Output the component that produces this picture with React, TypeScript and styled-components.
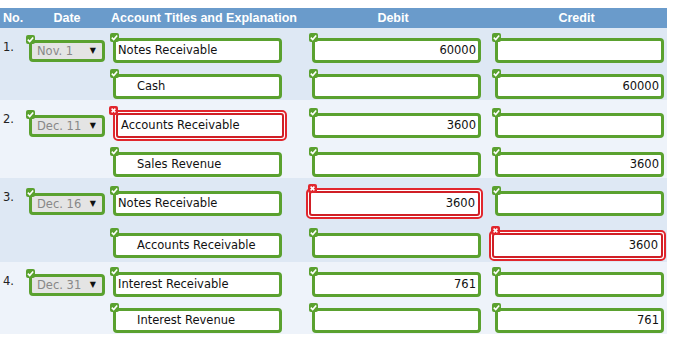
import styled, { createGlobalStyle } from "styled-components";

const GlobalStyle = createGlobalStyle`
  body {
    margin: 0;
    padding-top: 8px;
    background: #fff;
    font-family: "DejaVu Sans", Verdana, sans-serif;
  }
`;

const COLS = "26px 82px 192px 186px 181px";
const GREEN = "#5aa12f";
const RED = "#e1262d";

const Table = styled.div`
  width: 667px;
`;

const HeaderRow = styled.div`
  display: grid;
  grid-template-columns: ${COLS};
  height: 20px;
  align-items: center;
  background: #6a9bcb;
  color: #fff;
  font-family: "Liberation Sans", Arial, sans-serif;
  font-weight: bold;
  font-size: 12.5px;
`;

const HeadCell = styled.div<{ $left?: boolean }>`
  text-align: ${(p) => (p.$left ? "left" : "center")};
  padding-left: ${(p) => (p.$left ? "3px" : "0")};
  white-space: nowrap;
`;

const Entry = styled.div<{ $alt: boolean }>`
  background: ${(p) => (p.$alt ? "#eef3fa" : "#dee8f4")};
`;

const Line = styled.div`
  display: grid;
  grid-template-columns: ${COLS};
  align-items: center;
  padding: 10px 0 1px;
`;

const No = styled.div`
  align-self: start;
  padding: 2px 0 0 3px;
  font-size: 11.5px;
  color: #222;
`;

const Cell = styled.div<{ $pad: number }>`
  display: flex;
  padding-left: ${(p) => p.$pad}px;
`;

const Field = styled.div`
  position: relative;
`;

const Badge = styled.svg`
  position: absolute;
  left: -3px;
  top: -5px;
  width: 9px;
  height: 9px;
`;

const DateBox = styled.div`
  box-sizing: border-box;
  width: 76px;
  height: 22px;
  border: 3px solid ${GREEN};
  border-radius: 4px;
  background: #e4e4e4;
  color: #888;
  font-size: 11.5px;
  display: flex;
  align-items: center;
  justify-content: space-between;
  padding: 0 6px 0 5px;
`;

const Arrow = styled.span`
  color: #111;
  font-size: 8px;
`;

const Box = styled.div<{ $right?: boolean; $indent?: boolean }>`
  box-sizing: border-box;
  width: 169px;
  height: 25px;
  border: 3px solid ${GREEN};
  border-radius: 4px;
  background: #fff;
  color: #111;
  font-size: 11.5px;
  line-height: 19px;
  white-space: nowrap;
  text-align: ${(p) => (p.$right ? "right" : "left")};
  padding: 0 ${(p) => (p.$right ? "2px" : "0")} 0 ${(p) => (p.$indent ? "21px" : "2px")};
`;

const ErrorFrame = styled.div<{ $numeric?: boolean }>`
  box-sizing: border-box;
  width: ${(p) => (p.$numeric ? "177px" : "174px")};
  height: 31px;
  margin-left: ${(p) => (p.$numeric ? "-6px" : "0")};
  border: 2px solid ${RED};
  border-radius: 5px;
  padding: 1px;
  background: #fff;
`;

const ErrorInner = styled.div<{ $right?: boolean }>`
  box-sizing: border-box;
  height: 25px;
  border: 2px solid #d01f26;
  border-radius: 3px;
  background: #fff;
  color: #111;
  font-size: 11.5px;
  line-height: 21px;
  white-space: nowrap;
  text-align: ${(p) => (p.$right ? "right" : "left")};
  padding: 0 3px 0 3px;
`;

const Check = () => (
  <Badge viewBox="0 0 9 9">
    <rect width="9" height="9" rx="2" fill={GREEN} />
    <path d="M1.8 4.6 L3.7 6.5 L7.2 2.4" stroke="#fff" strokeWidth="1.6" fill="none" />
  </Badge>
);

const Cross = () => (
  <Badge viewBox="0 0 9 9" style={{ left: -4, top: -4 }}>
    <rect width="9" height="9" rx="2" fill={RED} />
    <path d="M2.6 2.6 L6.4 6.4 M6.4 2.6 L2.6 6.4" stroke="#fff" strokeWidth="1.5" fill="none" />
  </Badge>
);

type LineData = {
  account: string;
  debit: string;
  credit: string;
  indent?: boolean;
  err?: "account" | "debit" | "credit";
};

type EntryData = { no: number; date: string; lines: LineData[] };

const entries: EntryData[] = [
  {
    no: 1,
    date: "Nov. 1",
    lines: [
      { account: "Notes Receivable", debit: "60000", credit: "" },
      { account: "Cash", debit: "", credit: "60000", indent: true },
    ],
  },
  {
    no: 2,
    date: "Dec. 11",
    lines: [
      { account: "Accounts Receivable", debit: "3600", credit: "", err: "account" },
      { account: "Sales Revenue", debit: "", credit: "3600", indent: true },
    ],
  },
  {
    no: 3,
    date: "Dec. 16",
    lines: [
      { account: "Notes Receivable", debit: "3600", credit: "", err: "debit" },
      { account: "Accounts Receivable", debit: "", credit: "3600", indent: true, err: "credit" },
    ],
  },
  {
    no: 4,
    date: "Dec. 31",
    lines: [
      { account: "Interest Receivable", debit: "761", credit: "" },
      { account: "Interest Revenue", debit: "", credit: "761", indent: true },
    ],
  },
];

const InputField = ({
  value,
  right,
  indent,
  error,
}: {
  value: string;
  right?: boolean;
  indent?: boolean;
  error?: boolean;
}) =>
  error ? (
    <Field>
      <ErrorFrame $numeric={right}>
        <ErrorInner $right={right}>{value}</ErrorInner>
      </ErrorFrame>
      <Cross />
    </Field>
  ) : (
    <Field>
      <Box $right={right} $indent={indent}>
        {value}
      </Box>
      <Check />
    </Field>
  );

const App = () => (
  <>
    <GlobalStyle />
    <Table>
      <HeaderRow>
        <HeadCell $left>No.</HeadCell>
        <HeadCell>Date</HeadCell>
        <HeadCell>Account Titles and Explanation</HeadCell>
        <HeadCell>Debit</HeadCell>
        <HeadCell>Credit</HeadCell>
      </HeaderRow>
      {entries.map((entry, i) => (
        <Entry key={entry.no} $alt={i % 2 === 1}>
          {entry.lines.map((line, j) => (
            <Line key={j}>
              <No>{j === 0 ? `${entry.no}.` : ""}</No>
              <Cell $pad={3}>
                {j === 0 && (
                  <Field>
                    <DateBox>
                      {entry.date}
                      <Arrow>▼</Arrow>
                    </DateBox>
                    <Check />
                  </Field>
                )}
              </Cell>
              <Cell $pad={5}>
                <InputField value={line.account} indent={line.indent} error={line.err === "account"} />
              </Cell>
              <Cell $pad={12}>
                <InputField value={line.debit} right error={line.err === "debit"} />
              </Cell>
              <Cell $pad={9}>
                <InputField value={line.credit} right error={line.err === "credit"} />
              </Cell>
            </Line>
          ))}
        </Entry>
      ))}
    </Table>
  </>
);

export default App;
